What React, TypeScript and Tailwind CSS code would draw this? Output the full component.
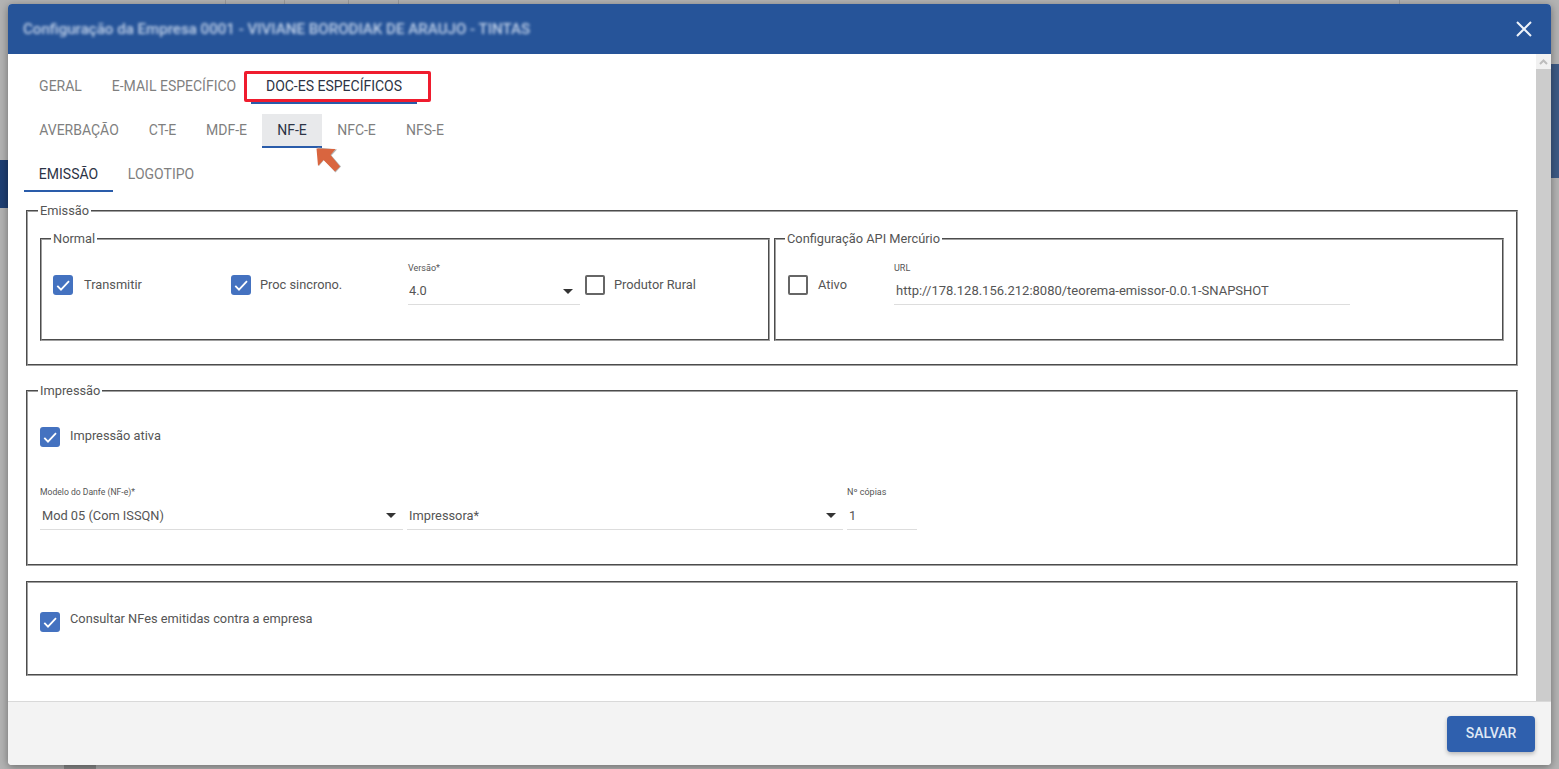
import React from "react";

const Check = ({ checked }: { checked?: boolean }) =>
  checked ? (
    <span className="block h-[20px] w-[20px] shrink-0 rounded-[3px] bg-[#4472c0]">
      <svg width="20" height="20" viewBox="0 0 20 20" fill="none" stroke="#fff" strokeWidth="1.8">
        <path d="M4.3 10.8 8 14.6 16 6.2" />
      </svg>
    </span>
  ) : (
    <span className="block h-[20px] w-[20px] shrink-0 rounded-[2px] border-2 border-[#666666] bg-white" />
  );

const Field = ({
  label,
  value,
  select,
  className,
  box = "h-[28px] pl-[2px]",
  labelSize = "text-[9px]",
  valueSize = "text-[12.8px]",
}: {
  label?: string;
  value: string;
  select?: boolean;
  className: string;
  box?: string;
  labelSize?: string;
  valueSize?: string;
}) => (
  <div className={`flex shrink-0 flex-col ${className}`}>
    <span className={`h-[14px] leading-[14px] text-[#555] ${labelSize}`}>{label}</span>
    <div className={`mt-[3px] flex items-center justify-between border-b border-[#dddddd] pr-[7px] ${box}`}>
      <span className={`text-[#555] ${valueSize}`}>{value}</span>
      {select && <span className="h-0 w-0 border-x-[5px] border-t-[5px] border-x-transparent border-t-[#333]" />}
    </div>
  </div>
);

const Label = ({ children, className = "" }: { children: React.ReactNode; className?: string }) => (
  <span className={`text-[12.8px] text-[#555] ${className}`}>{children}</span>
);

const fs = "min-w-0 border-2 [border-style:groove] border-[#a0a0a0]";
const legendInner = "ml-[9px] px-[2px] text-[12.8px] leading-[14px] text-[#555]";
const legendOuter = "ml-[-2px] px-[2px] text-[12.8px] leading-[14px] text-[#555]";

const Tab = ({ children, w, active, hl }: { children: string; w: string; active?: boolean; hl?: boolean }) => (
  <div
    className={`flex h-full items-center justify-center border-b-2 text-[14px] ${w} ${
      active ? "border-[#2a5caa] text-[#2c3345]" : "border-transparent text-[#7f7f7f]"
    } ${hl ? "bg-[#e8e9eb]" : ""}`}
  >
    {children}
  </div>
);

export default function App() {
  return (
    <div className="relative h-[769px] w-[1559px] overflow-hidden bg-[#b3b3b3] px-[8px] py-[4px] font-['Roboto',sans-serif]">
      {/* page behind the modal */}
      <div className="absolute top-0 left-[225px] h-[4px] w-px bg-[#9c9c9c]" />
      <div className="absolute top-0 left-[284px] h-[4px] w-px bg-[#9c9c9c]" />
      <div className="absolute top-0 left-[348px] h-[4px] w-px bg-[#9c9c9c]" />
      <div className="absolute top-0 left-[398px] h-[4px] w-px bg-[#9c9c9c]" />
      <div className="absolute top-0 left-[1399px] h-[4px] w-px bg-[#9c9c9c]" />
      <div className="absolute top-[160px] left-0 h-[48px] w-[8px] bg-[#1e3f73]" />
      <div className="absolute top-[64px] right-0 h-[114px] w-[8px] bg-[#3d5a85]" />
      <div className="absolute bottom-0 left-[64px] h-[4px] w-[32px] bg-[#8a8a8a]" />

      {/* modal */}
      <div className="relative flex h-[761px] flex-col overflow-hidden rounded-[4px] bg-white shadow-[0_2px_9px_rgba(0,0,0,0.4)]">
        <header className="flex h-[50px] shrink-0 items-center justify-between bg-[#265499] pr-[19px] pl-[15px]">
          <span className="text-[15.1px] font-medium text-[#c3d3ea] blur-[1.4px]">
            Configuração da Empresa 0001 - VIVIANE BORODIAK DE ARAUJO - TINTAS
          </span>
          <svg width="16" height="16" viewBox="0 0 16 16" stroke="#eef3fa" strokeWidth="2" fill="none">
            <path d="M1 1 15 15M15 1 1 15" />
          </svg>
        </header>

        <div className="flex min-h-0 flex-1">
          <main className="min-w-0 flex-1 px-[18px]">
            <div className="mt-[10px] ml-[-2px] flex h-[40px]">
              <Tab w="w-[73px] pt-[6px]">GERAL</Tab>
              <Tab w="w-[154px] pt-[6px]">E-MAIL ESPECÍFICO</Tab>
              <Tab w="w-[166px] pt-[6px]" active>DOC-ES ESPECÍFICOS</Tab>
            </div>
            <div className="mt-[10px] ml-[-2px] flex h-[34px]">
              <Tab w="w-[110px]">AVERBAÇÃO</Tab>
              <Tab w="w-[57px]">CT-E</Tab>
              <Tab w="w-[71px]">MDF-E</Tab>
              <Tab w="w-[60px]" active hl>NF-E</Tab>
              <Tab w="w-[69px]">NFC-E</Tab>
              <Tab w="w-[68px]">NFS-E</Tab>
            </div>
            <div className="mt-[10px] ml-[-2px] flex h-[34px]">
              <Tab w="w-[89px]" active>EMISSÃO</Tab>
              <Tab w="w-[96px]">LOGOTIPO</Tab>
            </div>

            <fieldset className={`mt-[12px] h-[162px] px-[12px] ${fs}`}>
              <legend className={legendOuter}>Emissão</legend>
              <div className="mt-[14px] flex gap-[4px]">
                <fieldset className={`h-[109px] flex-1 ${fs}`}>
                  <legend className={legendInner}>Normal</legend>
                  <div className="ml-[11px] flex items-start pt-[29px]">
                    <div className="flex h-[20px] w-[178px] items-center gap-[11px]">
                      <Check checked />
                      <Label>Transmitir</Label>
                    </div>
                    <div className="flex h-[20px] w-[177px] items-center gap-[9px]">
                      <Check checked />
                      <Label>Proc sincrono.</Label>
                    </div>
                    <Field className="mt-[-14px] mr-[5px] w-[172px]" box="h-[27px] pl-[1px]" label="Versão*" value="4.0" select />
                    <div className="flex h-[20px] items-center gap-[9px]">
                      <Check />
                      <Label>Produtor Rural</Label>
                    </div>
                  </div>
                </fieldset>
                <fieldset className={`h-[109px] flex-1 ${fs}`}>
                  <legend className={legendInner}>Configuração API Mercúrio</legend>
                  <div className="ml-[12px] flex items-start pt-[29px]">
                    <div className="flex h-[20px] w-[106px] items-center gap-[10px]">
                      <Check />
                      <Label>Ativo</Label>
                    </div>
                    <Field
                      className="mt-[-14px] w-[456px]"
                      box="h-[27px] pl-[2px]"
                      label="URL"
                      value="http://178.128.156.212:8080/teorema-emissor-0.0.1-SNAPSHOT"
                      valueSize="text-[13px]"
                    />
                  </div>
                </fieldset>
              </div>
            </fieldset>

            <fieldset className={`mt-[18px] h-[182px] px-[12px] ${fs}`}>
              <legend className={legendOuter}>Impressão</legend>
              <div className="mt-[29px] flex items-center gap-[10px]">
                <Check checked />
                <Label className="mt-[-2px]">Impressão ativa</Label>
              </div>
              <div className="mt-[38px] flex gap-[4px]">
                <Field className="w-[363px]" labelSize="text-[8.6px]" label="Modelo do Danfe (NF-e)*" value="Mod 05 (Com ISSQN)" select />
                <Field className="w-[436px]" value="Impressora*" select />
                <Field className="w-[70px]" label="Nº cópias" value="1" />
              </div>
            </fieldset>

            <fieldset className={`mt-[15px] h-[95px] px-[12px] ${fs}`}>
              <div className="mt-[29px] flex items-start gap-[10px]">
                <Check checked />
                <Label className="mt-[-3px]">Consultar NFes emitidas contra a empresa</Label>
              </div>
            </fieldset>
          </main>

          <div className="flex w-[15px] shrink-0 flex-col bg-[#cccccc]">
            <div className="flex h-[15px] items-center justify-center bg-[#f1f1f1]">
              <svg width="9" height="6" viewBox="0 0 9 6" fill="none" stroke="#bdbdbd" strokeWidth="2">
                <path d="M1 5 4.5 1.5 8 5" />
              </svg>
            </div>
          </div>
        </div>

        <footer className="flex h-[64px] shrink-0 items-center justify-end border-t border-[#d9d9d9] bg-[#f3f3f3] pr-[16px]">
          <button className="h-[36px] w-[88px] rounded-[4px] bg-[#2f60ae] text-[14px] font-medium text-[#dfe7f4] shadow-[0_2px_4px_rgba(0,0,0,0.25)]">
            SALVAR
          </button>
        </footer>
      </div>

      {/* annotations */}
      <div className="absolute top-[71px] left-[244px] h-[31px] w-[187px] rounded-[2px] border-[3px] border-[#ef1c2e]" />
      <svg className="absolute top-[145px] left-[313px]" width="30" height="30" viewBox="0 0 30 30">
        <path d="M4.5 2.5 24 4.5 18.5 10.5 28 21.5 22.5 27.5 11 15 6 21Z" fill="#b5b5b5" />
        <path d="M3.5 3.5 22.5 4 17.5 10 27 21.5 22 26.5 10.5 15 5 21Z" fill="#d9653f" />
      </svg>
    </div>
  );
}
